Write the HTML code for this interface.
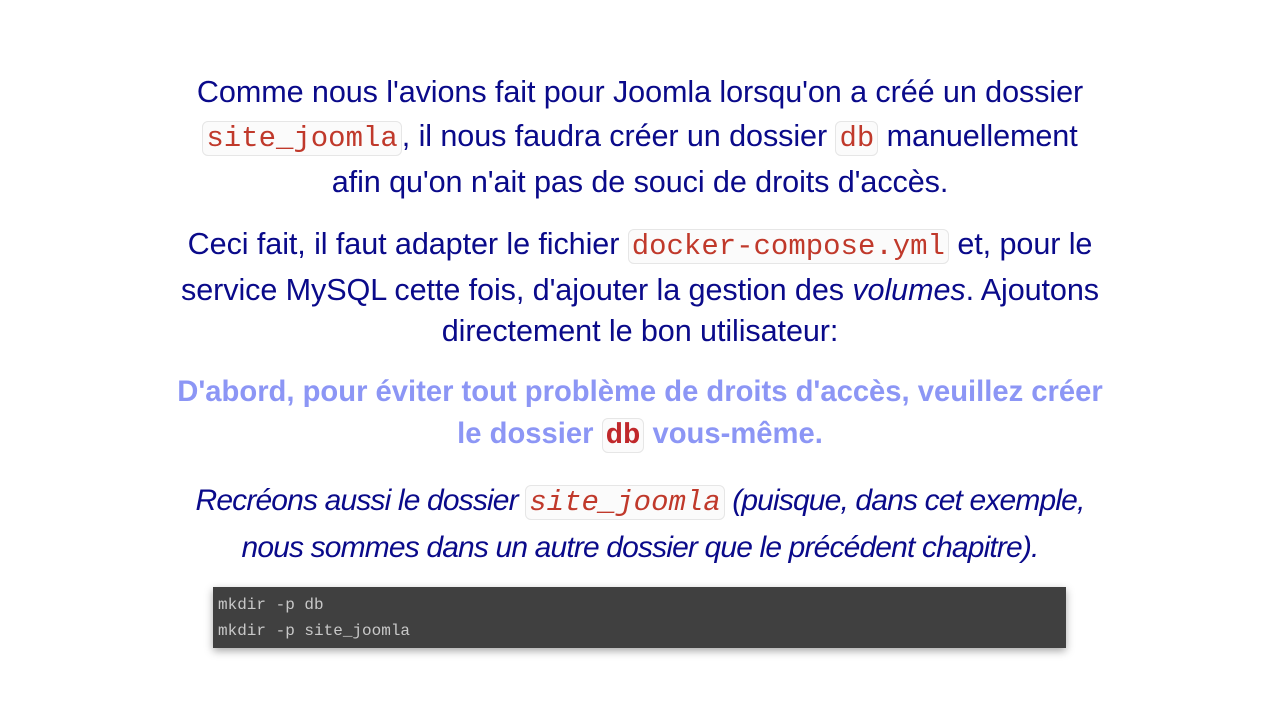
<!DOCTYPE html>
<html><head><meta charset="utf-8"><style>
html,body{margin:0;padding:0;background:#fff;width:1280px;height:720px;overflow:hidden}
body{font-family:"Liberation Sans",sans-serif;color:#0a0a8a;}
.p{position:absolute;left:0;width:1280px;text-align:center;font-size:30.6px;letter-spacing:-0.1px;white-space:nowrap}
.l{position:absolute;left:0;width:1280px;text-align:center;line-height:40px}
code{font-family:"Liberation Mono",monospace;font-size:29px;color:#c0392b;background:#fbfbfb;border:1px solid #e6e6e6;border-radius:6px;padding:0 3px;letter-spacing:0}
.b{font-weight:bold;color:#8c96f5;letter-spacing:0}
.b code{font-weight:bold;color:#c0282b}
.i{font-style:italic;letter-spacing:-0.85px;font-size:30px}
pre{position:absolute;left:213px;top:587px;width:853px;height:61px;margin:0;background:#404040;color:#c8c8c8;font-family:"Liberation Mono",monospace;font-size:16px;line-height:26px;padding:5px 5px 0;box-sizing:border-box;box-shadow:0 3px 8px rgba(0,0,0,.35)}
</style></head><body>
<div class="p">
<div class="l" style="top:72px">Comme nous l'avions fait pour Joomla lorsqu'on a créé un dossier</div>
<div class="l" style="top:116px"><code>site_joomla</code>, il nous faudra créer un dossier <code>db</code> manuellement</div>
<div class="l" style="top:162px">afin qu'on n'ait pas de souci de droits d'accès.</div>
<div class="l" style="top:224px">Ceci fait, il faut adapter le fichier <code>docker-compose.yml</code> et, pour le</div>
<div class="l" style="top:270px">service MySQL cette fois, d'ajouter la gestion des <i>volumes</i>. Ajoutons</div>
<div class="l" style="top:311px">directement le bon utilisateur:</div>
<div class="l b" style="top:372px;font-size:29.2px">D'abord, pour éviter tout problème de droits d'accès, veuillez créer</div>
<div class="l b" style="top:414px;font-size:29.2px">le dossier <code>db</code> vous-même.</div>
<div class="l i" style="top:481px">Recréons aussi le dossier <code>site_joomla</code> (puisque, dans cet exemple,</div>
<div class="l i" style="top:528px">nous sommes dans un autre dossier que le précédent chapitre).</div>
</div>
<pre>mkdir -p db
mkdir -p site_joomla</pre>
</body></html>
